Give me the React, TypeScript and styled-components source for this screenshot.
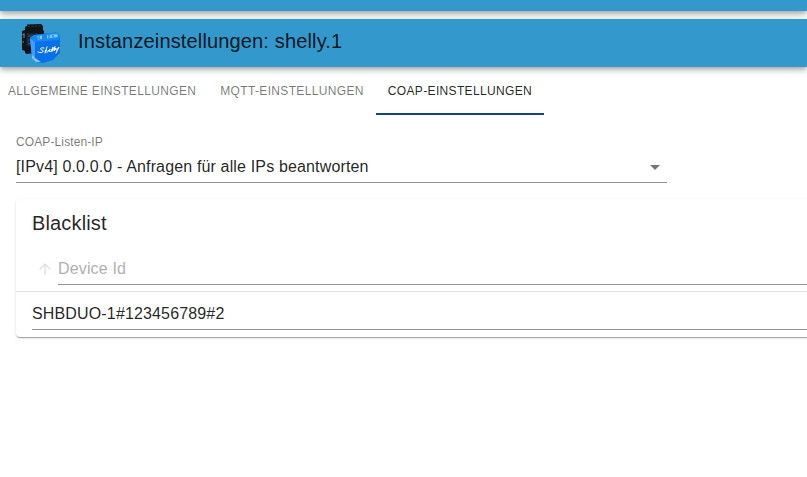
import React from "react";
import styled, { createGlobalStyle } from "styled-components";

const GlobalStyle = createGlobalStyle`
  *, *::before, *::after { box-sizing: border-box; }
  body {
    margin: 0;
    background: #fff;
    color: rgba(0, 0, 0, 0.87);
    font-family: "Liberation Sans", Arial, sans-serif;
    font-size: 16px;
  }
`;

const barShadow = `
  0 2px 4px -1px rgba(0, 0, 0, 0.2),
  0 4px 5px 0 rgba(0, 0, 0, 0.14),
  0 1px 10px 0 rgba(0, 0, 0, 0.12)`;

const tracking = {
  heading: "0.0075em",
  body: "0.00938em",
  button: "0.02857em",
};

const Page = styled.div`
  overflow: hidden;
  min-height: 100vh;
`;

const TopBar = styled.div`
  height: 11px;
  margin-bottom: 8px;
  background: #3399cc;
  box-shadow: ${barShadow};
`;

const TitleBar = styled.header`
  display: flex;
  align-items: center;
  gap: 16px;
  height: 48px;
  padding: 0 20px;
  background: #3399cc;
  box-shadow: ${barShadow};
`;

const Title = styled.h1`
  margin: 0;
  padding-bottom: 4px;
  font-size: 20px;
  font-weight: 400;
  line-height: 32px;
  letter-spacing: ${tracking.heading};
`;

const Tabs = styled.nav`
  display: flex;
  height: 48px;
`;

const Tab = styled.button<{ $active?: boolean }>`
  flex: none;
  padding: 2px 12px 0;
  border: 0;
  border-bottom: 2px solid ${(p) => (p.$active ? "#164477" : "transparent")};
  background: none;
  color: ${(p) => (p.$active ? "rgba(0, 0, 0, 0.87)" : "rgba(0, 0, 0, 0.54)")};
  font: inherit;
  font-size: 12px;
  letter-spacing: ${tracking.button};
  text-transform: uppercase;
  white-space: nowrap;
  cursor: pointer;

  &:first-child { padding-left: 8px; }
`;

const Content = styled.main`
  padding: 19px 0 16px 16px;
`;

const Field = styled.div`
  display: flex;
  flex-direction: column;
  width: calc(84% - 13px);
  min-width: 280px;
  margin-bottom: 16px;
`;

const FieldLabel = styled.label`
  color: rgba(0, 0, 0, 0.54);
  font-size: 12px;
  line-height: 16px;
  letter-spacing: ${tracking.body};
`;

const SelectBox = styled.div`
  display: grid;
  align-items: center;
  border-bottom: 1px solid #949494;

  & > * { grid-area: 1 / 1; }
`;

const Select = styled.select`
  width: 100%;
  height: 32px;
  padding: 1px 24px 0 0;
  border: 0;
  appearance: none;
  background: none;
  color: inherit;
  font: inherit;
  letter-spacing: ${tracking.body};
`;

const Caret = styled.svg`
  justify-self: end;
  width: 24px;
  height: 24px;
  margin-top: 2px;
  fill: rgba(0, 0, 0, 0.54);
  pointer-events: none;
`;

const Card = styled.section`
  margin-right: -16px;
  border-radius: 4px;
  background: #fff;
  box-shadow:
    0 2px 1px -1px rgba(0, 0, 0, 0.2),
    0 1px 1px 0 rgba(0, 0, 0, 0.14),
    0 1px 3px 0 rgba(0, 0, 0, 0.12);
`;

const CardTitle = styled.h2`
  margin: 0;
  padding: 8px 16px 13px;
  font-size: 20px;
  font-weight: 400;
  line-height: 32px;
  letter-spacing: ${tracking.heading};
`;

const Table = styled.table`
  width: 100%;
  border-collapse: collapse;
`;

const HeadCell = styled.th`
  padding: 0 0 6px 16px;
  border-bottom: 1px solid #e0e0e0;
  font-weight: 400;
`;

const BodyCell = styled.td`
  padding: 5px 0 7px 16px;
`;

const HeadTools = styled.div`
  display: flex;
  align-items: center;
  padding-left: 4px;
`;

const SortButton = styled.button`
  display: flex;
  flex: none;
  padding: 0 4px 0 0;
  border: 0;
  background: none;
  color: #e2e2e2;
  cursor: pointer;

  svg { width: 18px; height: 18px; fill: currentColor; }
`;

const TextInput = styled.input`
  display: block;
  width: 100%;
  min-width: 0;
  height: 33px;
  padding: 2px 0 0;
  border: 0;
  border-bottom: 1px solid #949494;
  border-radius: 0;
  background: none;
  color: inherit;
  font: inherit;
  letter-spacing: ${tracking.body};
  outline: none;

  &::placeholder { color: #b0b0b0; opacity: 1; }
`;

const Logo = styled.svg`
  flex: none;
  width: 42px;
  height: 42px;
`;

function ShellyLogo() {
  return (
    <Logo viewBox="0 0 42 42" aria-hidden="true">
      <path d="M5 5 L7 4 V2.5 L21 2 L23 4 V8 L24 9 V30 L7 32 L5 31 V29 L2 28 V9 L5 8Z" fill="#101416" />
      <path d="M8 4.5 L21 4" stroke="#30383c" strokeWidth="1" strokeDasharray="2 1.5" />
      <rect x="6.5" y="11" width="11" height="13" fill="#1d2638" />
      <path d="M8 14 H14 M8 18 H11 M8 21.5 H11" stroke="#3d5478" strokeWidth="1" />
      <path d="M2.5 13 L4 11.5 V16 M2.5 20 H4" fill="none" stroke="#8c8f90" strokeWidth="1" />
      <path d="M10 16 L14 13 L36 10.5 L40 14 V31 L33 38 L23 41 L16 40 L12 36Z" fill="#0871ea" />
      <path d="M10 16 L15 20 V39 L12 36Z" fill="#3f9dfb" />
      <path d="M12 33 L15 36 L21 40 L16 40 L12 36Z" fill="#85c8fb" />
      <path d="M10 16 L14 13 L36 10.5 L40 14 L39 18 L15 20Z" fill="#1686f0" />
      <path d="M17 14 L22 13.5 V17 L18 17.5Z M27 13 L37 12 L38 15 L27 16.5Z" fill="#76c8f5" />
      <path d="M19 14 V17 M29 13 V16 M33 13 V15.5" stroke="#0b68c9" strokeWidth="1" />
      <path
        d="M24 26 C21 25 19 27 22 28 C25 29 22 32 18 30 M27 25 L25 31 M25 29 Q28 27 27 30.5 M28.5 29 Q31 28 30 27 Q27 30 31 29.5 L33 25 L32 29.5 L35 24.5 L34 29 L36 26 Q35 29 37 27.5 L39 25 L36 31"
        fill="none"
        stroke="#fff"
        strokeWidth="1"
        strokeLinecap="round"
        strokeLinejoin="round"
      />
    </Logo>
  );
}

const tabs = ["Allgemeine Einstellungen", "MQTT-Einstellungen", "CoAP-Einstellungen"];

export default function App() {
  const [active, setActive] = React.useState(2);
  return (
    <Page>
      <GlobalStyle />
      <TopBar />
      <TitleBar>
        <ShellyLogo />
        <Title>Instanzeinstellungen: shelly.1</Title>
      </TitleBar>
      <Tabs role="tablist">
        {tabs.map((label, i) => (
          <Tab key={label} type="button" role="tab" aria-selected={i === active} $active={i === active} onClick={() => setActive(i)}>
            {label}
          </Tab>
        ))}
      </Tabs>
      <Content>
        <Field>
          <FieldLabel htmlFor="listen-ip">COAP-Listen-IP</FieldLabel>
          <SelectBox>
            <Select id="listen-ip">
              <option>[IPv4] 0.0.0.0 - Anfragen für alle IPs beantworten</option>
            </Select>
            <Caret viewBox="0 0 24 24" aria-hidden="true">
              <path d="M7 10l5 5 5-5z" />
            </Caret>
          </SelectBox>
        </Field>
        <Card>
          <CardTitle>Blacklist</CardTitle>
          <Table>
            <thead>
              <tr>
                <HeadCell scope="col">
                  <HeadTools>
                    <SortButton type="button" aria-label="Sortieren">
                      <svg viewBox="0 0 24 24" aria-hidden="true">
                        <path d="M4 12l1.41 1.41L11 7.83V20h2V7.83l5.58 5.59L20 12l-8-8-8 8z" />
                      </svg>
                    </SortButton>
                    <TextInput aria-label="Device Id" placeholder="Device Id" />
                  </HeadTools>
                </HeadCell>
              </tr>
            </thead>
            <tbody>
              <tr>
                <BodyCell>
                  <TextInput aria-label="Device Id" defaultValue="SHBDUO-1#123456789#2" />
                </BodyCell>
              </tr>
            </tbody>
          </Table>
        </Card>
      </Content>
    </Page>
  );
}
